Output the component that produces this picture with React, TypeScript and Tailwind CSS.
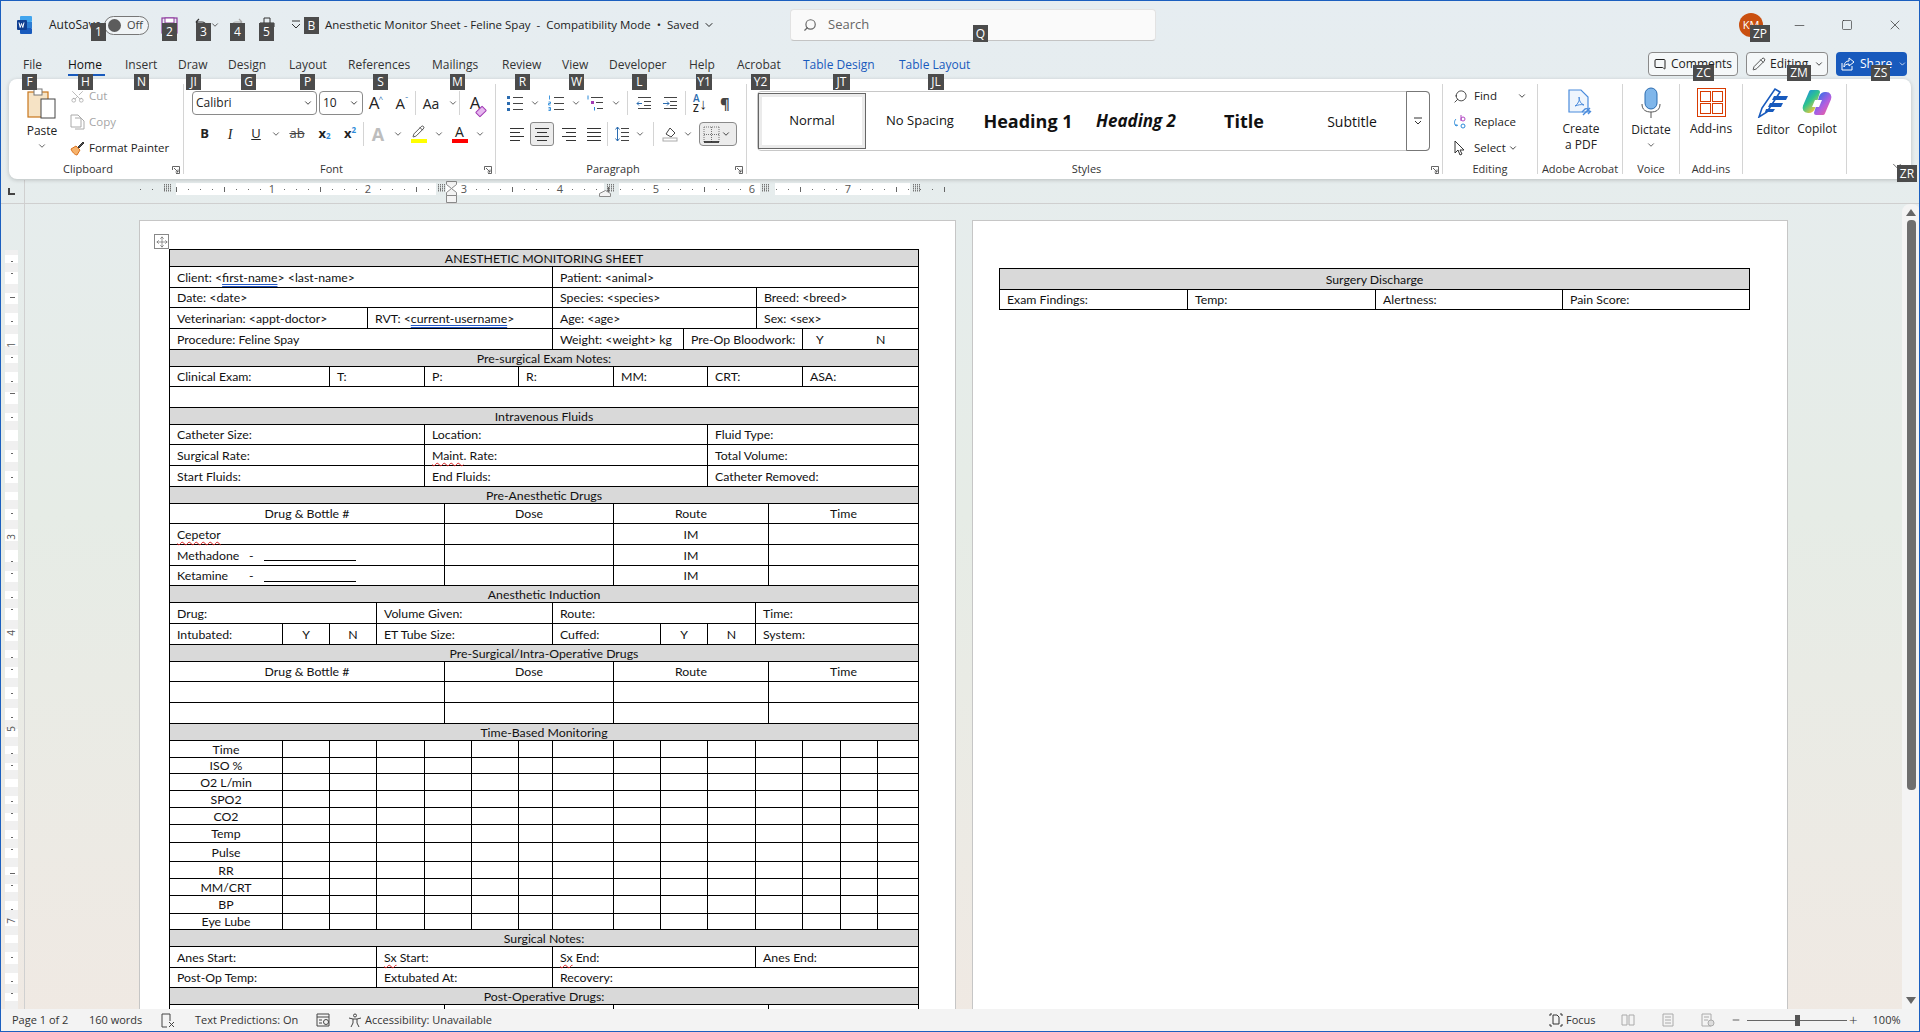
import type { ReactNode } from "react";
import { ChevronDown, Scissors, Search, Minus, Square, X, Pencil, MessageSquare, Move } from "lucide-react";

const rowLines = [249, 266, 287, 307, 328, 349, 366, 386, 407, 424, 444, 465, 486, 503, 523, 544, 565, 585, 602, 623, 644, 661, 681, 702, 723, 740, 757, 773, 790, 807, 824, 842, 861, 878, 895, 913, 929, 946, 967, 987, 1004];

function Chev({ c = "w-[14px]" }: { c?: string }) {
  return (
    <span className={`flex justify-center ${c}`}>
      <ChevronDown size={10} strokeWidth={2} className="text-[#444]" />
    </span>
  );
}

function S({ c, children }: { c: string; children?: ReactNode }) {
  return <span className={`flex h-full shrink-0 items-center justify-center ${c}`}>{children}</span>;
}

function Sep({ c = "" }: { c?: string }) {
  return <span className={`h-[24px] w-px shrink-0 bg-[#d4d4d4] ${c}`} />;
}

function Tip({ c, children }: { c: string; children: ReactNode }) {
  return (
    <div className={`absolute z-20 flex items-center justify-center bg-[#4b4b4b] text-[12px] leading-none text-white ${c}`}>
      {children}
    </div>
  );
}

function Lines({ rows, x = 2, w = 14, color = "#444" }: { rows: number[]; x?: number; w?: number; color?: string }) {
  return (
    <>
      {rows.map((y) => (
        <line key={y} x1={x} x2={x + w} y1={y} y2={y} stroke={color} strokeWidth="1" />
      ))}
    </>
  );
}

function Ico({ children, w = 18, h = 18 }: { children: ReactNode; w?: number; h?: number }) {
  return (
    <svg width={w} height={h} viewBox={`0 0 ${w} ${h}`} fill="none" className="shrink-0">
      {children}
    </svg>
  );
}

function WordLogo() {
  return (
    <svg width="16" height="18" viewBox="0 0 16 18">
      <rect x="3" y="0" width="12" height="6" rx="1" fill="#41a5ee" />
      <rect x="3" y="6" width="12" height="6" fill="#2b7cd3" />
      <rect x="3" y="12" width="12" height="6" rx="1" fill="#185abd" />
      <rect x="0" y="4" width="10" height="10" rx="1" fill="#103f91" />
      <path d="M2 6.5l1.2 5 1.3-4 1.3 4 1.2-5" stroke="#fff" strokeWidth="1" fill="none" />
    </svg>
  );
}

function TitleBar() {
  return (
    <div className="flex h-[48px] shrink-0 items-center text-[#222]">
      <S c="w-[16px]" />
      <WordLogo />
      <span className="ml-[16px] w-[55px] text-[12px]">AutoSave</span>
      <div className="flex h-[19px] w-[45px] items-center rounded-full border border-[#777] bg-white/40 pl-[3px]">
        <span className="h-[13px] w-[13px] rounded-full bg-[#5c5c5c]" />
        <span className="ml-[6px] text-[11px] text-[#444]">Off</span>
      </div>
      <S c="ml-[12px] w-[17px]">
        <Ico w={17} h={17}>
          <rect x="1" y="1" width="15" height="15" fill="none" stroke="#8e3a9d" strokeWidth="1.2" />
          <rect x="4" y="1" width="9" height="5" fill="#fff" stroke="#8e3a9d" />
        </Ico>
      </S>
      <S c="ml-[14px] w-[16px]">
        <Ico w={16} h={16}>
          <path d="M4 5h6a4 4 0 0 1 4 4v5M4 5l3-3M4 5l3 3" stroke="#333" strokeWidth="1.2" />
        </Ico>
      </S>
      <Chev c="w-[14px]" />
      <S c="ml-[8px] w-[16px]">
        <Ico w={16} h={16}>
          <path d="M12 5H6a4 4 0 0 0-4 4v5M12 5L9 2M12 5l-3 3" stroke="#aaa" strokeWidth="1.2" />
        </Ico>
      </S>
      <S c="ml-[13px] w-[16px]">
        <Ico w={16} h={16}>
          <path d="M5 6V1h6v5M1 6h14v4H1zM3 10v5h10v-5" stroke="#333" strokeWidth="1" />
        </Ico>
      </S>
      <S c="ml-[16px] w-[10px]">
        <Ico w={10} h={10}>
          <path d="M1 1h8M1 4l4 4 4-4" stroke="#333" strokeWidth="1" />
        </Ico>
      </S>
      <div className="ml-[24px] flex w-[465px] shrink-0 items-center whitespace-pre text-[11.5px] text-[#222]">
        Anesthetic Monitor Sheet - Feline Spay  -  Compatibility Mode  •  Saved
        <ChevronDown size={12} className="ml-[4px]" />
      </div>
      <div className="flex h-[32px] w-[366px] shrink-0 items-center rounded-[4px] border border-[#e2e2e2] border-b-[#c4c4c4] bg-[#fafafa] pl-[12px] text-[13px] text-[#666]">
        <Search size={14} className="-scale-x-100 text-[#666]" />
        <span className="ml-[11px]">Search</span>
      </div>
      <div className="ml-[583px] flex h-[24px] w-[24px] shrink-0 items-center justify-center rounded-full bg-[#ca5010] text-[11px] text-white">
        KM
      </div>
      <S c="ml-[28px] w-[16px]">
        <Minus size={15} strokeWidth={1} />
      </S>
      <S c="ml-[32px] w-[16px]">
        <Square size={12} strokeWidth={1.2} />
      </S>
      <S c="ml-[32px] w-[16px]">
        <X size={16} strokeWidth={1} />
      </S>
    </div>
  );
}

const tabs = [
  ["File", "w-[45px]"],
  ["Home", "w-[57px]"],
  ["Insert", "w-[53px]"],
  ["Draw", "w-[50px]"],
  ["Design", "w-[61px]"],
  ["Layout", "w-[59px]"],
  ["References", "w-[84px]"],
  ["Mailings", "w-[70px]"],
  ["Review", "w-[60px]"],
  ["View", "w-[47px]"],
  ["Developer", "w-[80px]"],
  ["Help", "w-[48px]"],
  ["Acrobat", "w-[66px]"],
];

function TabRow() {
  return (
    <div className="flex h-[30px] shrink-0 items-center pl-[22px] text-[12px] text-[#333]">
      {tabs.map(([name, w]) => (
        <span key={name} className={`relative shrink-0 pt-[2px] ${w} ${name === "Home" ? "font-medium text-[#111]" : ""}`}>
          {name}
          {name === "Home" && <span className="absolute left-0 top-[20px] h-[2px] w-[37px] bg-[#185abd]" />}
        </span>
      ))}
      <span className="w-[96px] shrink-0 pt-[2px] text-[#185abd]">Table Design</span>
      <span className="w-[80px] shrink-0 pt-[2px] text-[#185abd]">Table Layout</span>
      <div className="ml-[669px] flex h-[24px] w-[90px] shrink-0 items-center rounded-[4px] border border-[#8a8a8a] bg-white/60 pl-[5px] text-[12px] text-[#222]">
        <MessageSquare size={12} className="-scale-x-100" />
        <span className="ml-[5px]">Comments</span>
      </div>
      <div className="ml-[8px] flex h-[24px] w-[82px] shrink-0 items-center rounded-[4px] border border-[#8a8a8a] bg-white/60 pl-[5px] text-[12px] text-[#222]">
        <Pencil size={14} strokeWidth={1.3} />
        <span className="ml-[4px]">Editing</span>
        <ChevronDown size={10} className="ml-[6px]" />
      </div>
      <div className="ml-[8px] flex h-[24px] w-[71px] shrink-0 items-center rounded-[4px] bg-[#185abd] pl-[5px] text-[12px] text-white">
        <Ico w={14} h={14}>
          <path d="M1 6v7h10V9M8 1l5 4-5 4V7C5 7 4 8 3 10c0-4 2-6 5-6z" stroke="#fff" strokeWidth="1" />
        </Ico>
        <span className="ml-[5px]">Share</span>
        <ChevronDown size={10} className="ml-[6px]" />
      </div>
    </div>
  );
}

function Launcher() {
  return (
    <svg width="8" height="8" viewBox="0 0 8 8" fill="none" className="absolute bottom-[0px] right-[3px]">
      <path d="M0.5 4V0.5H7.5V7.5H4M2 2l4 4M6 3.5V6H3.5" stroke="#555" strokeWidth="0.9" />
    </svg>
  );
}

function Group({ c, label, launcher, children }: { c: string; label?: string; launcher?: boolean; children: ReactNode }) {
  return (
    <div className={`relative my-[5px] flex shrink-0 flex-col border-r border-[#d4d4d4] ${c}`}>
      <div className="h-[79px] shrink-0">{children}</div>
      <div className={`text-center text-[11px] leading-[11px] text-[#333] ${launcher ? "pr-[16px]" : ""}`}>{label}</div>
      {launcher && <Launcher />}
    </div>
  );
}

function Clipboard() {
  return (
    <Group c="w-[175px]" label="Clipboard" launcher>
      <div className="flex h-full">
        <div className="flex w-[58px] flex-col items-center pl-[8px] pt-[4px]">
          <svg width="30" height="31" viewBox="0 0 30 31" fill="none">
            <rect x="1" y="4" width="20" height="25" fill="#f6e3c5" stroke="#c8761c" strokeWidth="1.2" />
            <rect x="7" y="1" width="8" height="6" fill="#fff" stroke="#777" />
            <rect x="14" y="11" width="14" height="19" fill="#fff" stroke="#444" />
          </svg>
          <span className="mt-[5px] text-[12px] leading-[14px] text-[#222]">Paste</span>
          <ChevronDown size={10} className="mt-[3px] text-[#444]" />
        </div>
        <div className="-mt-px text-[11.5px] text-[#222]">
          <div className="flex h-[26px] items-center pl-[3px] text-[#a6a6a6]">
            <Scissors size={15} strokeWidth={1.2} className="-rotate-90" />
            <span className="ml-[4px]">Cut</span>
          </div>
          <div className="flex h-[26px] items-center pl-[3px] text-[#a6a6a6]">
            <Ico w={15} h={16}>
              <path d="M1 1h7l3 3v9H1zM5 4h6l3 3v8H5" stroke="#aaa" strokeWidth="1" />
            </Ico>
            <span className="ml-[4px]">Copy</span>
          </div>
          <div className="flex h-[26px] items-center whitespace-nowrap pl-[3px]">
            <Ico w={15} h={16}>
              <path d="M1 9l5-3 4 4-3 5c-2 0-5-3-6-6z" fill="#f6b26b" stroke="#d9701c" />
              <path d="M8 7l5-5 1 1-5 5z" fill="#555" stroke="#333" />
            </Ico>
            <span className="ml-[4px]">Format Painter</span>
          </div>
        </div>
      </div>
    </Group>
  );
}

function FontGroup() {
  return (
    <Group c="w-[312px]" label="Font" launcher>
      <div className="flex h-[24px] items-center pl-[8px] mt-[7px] text-[#222]">
        <div className="flex h-[24px] w-[125px] shrink-0 items-center justify-between rounded-[4px] border border-[#8a8a8a] bg-white pl-[3px] pr-[3px] text-[12px]">
          Calibri
          <ChevronDown size={10} />
        </div>
        <div className="ml-[2px] flex h-[24px] w-[44px] shrink-0 items-center justify-between rounded-[4px] border border-[#8a8a8a] bg-white pl-[3px] pr-[3px] text-[12px]">
          10
          <ChevronDown size={10} />
        </div>
        <S c="w-[26px] text-[17px]">
          A<sup className="-ml-px text-[8px] text-[#2b6cb0]">^</sup>
        </S>
        <S c="w-[26px] text-[15px]">
          A<sup className="text-[8px] text-[#2b6cb0]">ˇ</sup>
        </S>
        <Sep />
        <S c="w-[30px] text-[14px]">Aa</S>
        <Chev c="w-[13px]" />
        <Sep />
        <S c="w-[30px] text-[17px]">
          <span className="relative">
            A
            <span className="absolute -right-[6px] bottom-[1px] h-[7px] w-[10px] -rotate-45 rounded-[1px] border border-[#a23cb4] bg-[#e6b8ef]" />
          </span>
        </S>
      </div>
      <div className="mt-[7px] flex h-[24px] items-center pl-[8px] text-[13px] text-[#222]">
        <S c="w-[25px] font-bold">B</S>
        <S c="w-[26px] italic font-['Liberation_Serif',serif] text-[14px]">I</S>
        <S c="w-[26px] underline">U</S>
        <Chev />
        <S c="w-[28px] line-through text-[#444]">ab</S>
        <S c="w-[27px] font-bold">
          x<sub className="text-[8px] text-[#2b8ad9]">2</sub>
        </S>
        <S c="w-[24px] font-bold">
          x<sup className="text-[8px] text-[#2b8ad9]">2</sup>
        </S>
        <Sep c="mx-px" />
        <S c="w-[26px] text-[18px] font-bold text-[#bdbdbd]">A</S>
        <Chev c="w-[13px]" />
        <S c="w-[29px]">
          <span className="flex flex-col items-center">
            <Pencil size={13} strokeWidth={1.4} />
            <span className="mt-[1px] h-[4px] w-[16px] bg-[#ffff00]" />
          </span>
        </S>
        <Chev c="w-[12px]" />
        <S c="w-[29px]">
          <span className="flex flex-col items-center text-[14px] leading-[14px]">
            A
            <span className="h-[4px] w-[16px] bg-[#ff0000]" />
          </span>
        </S>
        <Chev c="w-[12px]" />
      </div>
    </Group>
  );
}

function AlignIcon({ kind }: { kind: "l" | "c" | "r" | "j" }) {
  const rows = [2, 6, 10, 14];
  const widths = kind === "j" ? [14, 14, 14, 14] : [14, 10, 14, 10];
  return (
    <Ico w={16} h={16}>
      {rows.map((y, i) => {
        const w = widths[i];
        const x = kind === "c" ? 8 - w / 2 : kind === "r" ? 15 - w : 1;
        return <line key={y} x1={x} x2={x + w} y1={y + 0.5} y2={y + 0.5} stroke="#333" />;
      })}
    </Ico>
  );
}

function ListIcon({ color }: { color: string }) {
  return (
    <Ico w={18} h={16}>
      <rect x="1" y="1" width="3" height="3" fill={color} />
      <rect x="1" y="7" width="3" height="3" fill={color} />
      <rect x="1" y="13" width="3" height="3" fill={color} />
      <Lines rows={[2.5, 8.5, 14.5]} x={7} w={10} />
    </Ico>
  );
}

function NumIcon() {
  return (
    <Ico w={18} h={16}>
      <path d="M2.5 0.5v4M1.5 7h2v1.5h-2V10h2M1.5 12.5h2v3h-2M1.5 14h2" stroke="#2b8ad9" strokeWidth="0.9" />
      <Lines rows={[2.5, 8.5, 14.5]} x={7} w={10} />
    </Ico>
  );
}

function MultiIcon() {
  return (
    <Ico w={18} h={16}>
      <path d="M2 0.5v4" stroke="#2b8ad9" />
      <rect x="5" y="6" width="3" height="3" fill="#a23cb4" />
      <path d="M8.5 12v3.5" stroke="#2b8ad9" />
      <Lines rows={[2.5]} x={5} w={12} />
      <Lines rows={[7.5]} x={10} w={7} />
      <Lines rows={[13.5]} x={11} w={6} />
    </Ico>
  );
}

function ParagraphGroup() {
  return (
    <Group c="w-[251px]" label="Paragraph" launcher>
      <div className="mt-[7px] flex h-[24px] items-center pl-[8px] text-[#222]">
        <S c="w-[22px]"><ListIcon color="#2b6cb0" /></S>
        <Chev c="w-[18px]" />
        <S c="w-[24px]"><NumIcon /></S>
        <Chev c="w-[15px]" />
        <S c="w-[24px]"><MultiIcon /></S>
        <Chev c="w-[17px]" />
        <Sep c="mx-[3px]" />
        <S c="w-[26px]">
          <Ico w={16} h={14}>
            <Lines rows={[1.5, 12.5]} x={2} w={13} />
            <Lines rows={[5.5, 9.5]} x={8} w={7} />
            <path d="M1 7.5h5M1 7.5l2-2M1 7.5l2 2" stroke="#2b6cb0" />
          </Ico>
        </S>
        <S c="w-[26px]">
          <Ico w={16} h={14}>
            <Lines rows={[1.5, 12.5]} x={2} w={13} />
            <Lines rows={[5.5, 9.5]} x={8} w={7} />
            <path d="M1 7.5h6M7 7.5l-2-2M7 7.5l-2 2" stroke="#2b6cb0" />
          </Ico>
        </S>
        <Sep c="mx-[2px]" />
        <S c="-ml-px w-[26px]">
          <span className="flex items-center text-[10px] font-semibold leading-[10px]">
            <span className="flex flex-col"><span className="text-[#2b6cb0]">A</span><span>Z</span></span>
            <span className="text-[15px] font-normal">↓</span>
          </span>
        </S>
        <S c="w-[24px] text-[15px] font-bold text-[#444]">¶</S>
      </div>
      <div className="mt-[7px] flex h-[24px] items-center pl-[8px] text-[#222]">
        <S c="w-[26px]"><AlignIcon kind="l" /></S>
        <S c="w-[24px] rounded-[3px] border border-[#8a8a8a] bg-[#ececec]"><AlignIcon kind="c" /></S>
        <S c="ml-[2px] w-[25px]"><AlignIcon kind="r" /></S>
        <S c="w-[26px]"><AlignIcon kind="j" /></S>
        <Sep />
        <S c="ml-[2px] w-[23px]">
          <Ico w={16} h={16}>
            <Lines rows={[2.5, 6.5, 10.5, 14.5]} x={7} w={8} />
            <path d="M3.5 1v14M3.5 1l-2 2.5M3.5 1l2 2.5M3.5 15l-2-2.5M3.5 15l2-2.5" stroke="#2b6cb0" />
          </Ico>
        </S>
        <Chev c="w-[14px]" />
        <Sep c="ml-[6px]" />
        <S c="ml-[5px] w-[22px]">
          <Ico w={16} h={16}>
            <path d="M4 8l4-6 5 5-4 4z" stroke="#444" fill="#fff" />
            <rect x="1" y="12" width="14" height="3" fill="#fff" stroke="#aaa" />
          </Ico>
        </S>
        <Chev c="w-[14px]" />
        <div className="ml-[4px] flex h-[24px] w-[38px] shrink-0 items-center justify-between rounded-[4px] border border-[#8a8a8a] bg-[#ececec] pl-[3px] pr-[5px]">
          <Ico w={17} h={17}>
            <path d="M1 1h15M1 1v15M16 1v15M8.5 1v15M1 8.5h15" stroke="#777" strokeDasharray="1 1" />
            <line x1="1" x2="16" y1="16" y2="16" stroke="#111" strokeWidth="1.5" />
          </Ico>
          <ChevronDown size={10} />
        </div>
      </div>
    </Group>
  );
}

function StylesGroup() {
  return (
    <Group c="w-[696px]" label="Styles" launcher>
      <div className="ml-[10px] mt-[7px] flex h-[60px] w-[673px] items-center rounded-[4px] border border-[#c8c8c8] text-[#111]">
        <div className="flex h-[56px] w-[108px] shrink-0 items-center justify-center border border-[#666] text-[13px] outline-[3px] -outline-offset-[4px] outline-[#ebebeb]">Normal</div>
        <div className="flex w-[108px] shrink-0 justify-center text-[13px]">No Spacing</div>
        <div className="flex w-[108px] shrink-0 justify-center text-[18px] font-bold">Heading 1</div>
        <div className="flex w-[108px] shrink-0 justify-center text-[17px] font-bold italic">Heading 2</div>
        <div className="flex w-[108px] shrink-0 justify-center text-[18px] font-bold">Title</div>
        <div className="flex w-[108px] shrink-0 justify-center text-[14px]">Subtitle</div>
        <div className="-mr-px ml-auto flex h-[60px] w-[24px] shrink-0 items-center justify-center rounded-r-[4px] border border-[#777]">
          <Ico w={8} h={8}>
            <path d="M0 1h8M1 4l3 3 3-3" stroke="#333" />
          </Ico>
        </div>
      </div>
    </Group>
  );
}

function Editing() {
  return (
    <Group c="w-[95px]" label="Editing">
      <div className="-mt-px pl-[10px] text-[11.5px] text-[#222]">
        <div className="flex h-[26px] items-center">
          <Search size={15} strokeWidth={1.3} className="-scale-x-100" />
          <span className="ml-[6px] w-[43px]">Find</span>
          <ChevronDown size={10} />
        </div>
        <div className="flex h-[26px] items-center">
          <Ico w={15} h={16}>
            <path d="M3 5C1 7 1 10 3 12l2-1M3 12l0-2" stroke="#2b8ad9" />
            <path d="M8 1v6" stroke="#b146c2" />
            <circle cx="10" cy="5" r="2" stroke="#b146c2" />
            <circle cx="10" cy="12" r="2" stroke="#2b8ad9" />
          </Ico>
          <span className="ml-[6px]">Replace</span>
        </div>
        <div className="flex h-[26px] items-center">
          <Ico w={15} h={16}>
            <path d="M2 1v12l3-3 2 5 2-1-2-4h4z" fill="#fff" stroke="#333" />
          </Ico>
          <span className="ml-[6px]">Select</span>
          <ChevronDown size={10} className="ml-[2px]" />
        </div>
      </div>
    </Group>
  );
}

function BigLabel({ children }: { children: ReactNode }) {
  return <div className="text-center text-[12px] leading-[16px] text-[#222]">{children}</div>;
}

function RightGroups() {
  return (
    <>
      <Group c="w-[85px]" label="Adobe Acrobat">
        <div className="flex flex-col items-center pl-[2px] pt-[5px]">
          <svg width="26" height="30" viewBox="0 0 26 30" fill="none">
            <path d="M1 1h12l7 7v15H1z" fill="#eef5fd" stroke="#4a8bdc" strokeWidth="1.2" />
            <path d="M7 17c3-2 5-6 4-9 0 4 2 7 5 8-3-1-6 0-9 1z" stroke="#4a8bdc" />
            <path d="M15 26l7-7M14 23l3-3a3 3 0 0 1 4 4M23 22l-3 3" stroke="#4a8bdc" strokeWidth="1.4" />
          </svg>
          <div className="mt-[2px]"><BigLabel>Create<br />a PDF</BigLabel></div>
        </div>
      </Group>
      <Group c="w-[57px]" label="Voice">
        <div className="flex flex-col items-center pt-[3px]">
          <svg width="20" height="31" viewBox="0 0 20 31" fill="none">
            <rect x="4" y="1" width="12" height="21" rx="6" fill="#7fb6ea" stroke="#2b6cb0" />
            <path d="M1 17c0 6 4 8 9 8s9-2 9-8M10 25v6" stroke="#555" />
          </svg>
          <div className="mt-[4px]"><BigLabel>Dictate</BigLabel></div>
          <ChevronDown size={10} className="mt-[2px] text-[#444]" />
        </div>
      </Group>
      <Group c="w-[63px]" label="Add-ins">
        <div className="flex flex-col items-center pt-[4px]">
          <svg width="29" height="29" viewBox="0 0 29 29" fill="none" stroke="#d83b01">
            <rect x="0.5" y="0.5" width="28" height="28" />
            <rect x="3.5" y="3.5" width="10" height="10" />
            <rect x="15.5" y="3.5" width="10" height="10" />
            <rect x="3.5" y="15.5" width="10" height="10" />
            <rect x="15.5" y="15.5" width="10" height="10" />
          </svg>
          <div className="mt-[4px]"><BigLabel>Add-ins</BigLabel></div>
        </div>
      </Group>
      <Group c="w-[104px]">
        <div className="flex pt-[3px]">
          <div className="flex w-[57px] flex-col items-center pl-[3px]">
            <svg width="32" height="31" viewBox="0 0 32 31" fill="none">
              <path d="M2 30l3-9L18 2l5 3L10 25z" fill="#fff" stroke="#185abd" strokeWidth="1.6" />
              <path d="M17 9h14l-2 4H15zM13 16h13l-2 4H11zM9 22h9l-2 3H8z" fill="#185abd" />
            </svg>
            <div className="mt-[4px]"><BigLabel>Editor</BigLabel></div>
          </div>
          <div className="-ml-[4px] flex w-[42px] flex-col items-center">
            <svg width="30" height="29" viewBox="0 0 30 29" fill="none" className="mt-[1px]">
              <defs>
                <linearGradient id="cpA" x1="0" y1="0" x2="0.7" y2="1">
                  <stop offset="0" stopColor="#1c8fe0" />
                  <stop offset="0.5" stopColor="#2fc48d" />
                  <stop offset="1" stopColor="#f2c83b" />
                </linearGradient>
                <linearGradient id="cpB" x1="0.2" y1="0" x2="1" y2="1">
                  <stop offset="0" stopColor="#3b6fe8" />
                  <stop offset="0.55" stopColor="#b15fe0" />
                  <stop offset="1" stopColor="#f0609a" />
                </linearGradient>
              </defs>
              <path d="M9 4h7L11 20c-1 2-2 3-4 3H6c-3 0-4-2-3-5z" fill="url(#cpA)" stroke="url(#cpA)" strokeWidth="4" strokeLinejoin="round" />
              <path d="M21 25h-7l5-16c1-2 2-3 4-3h1c3 0 4 2 3 5z" fill="url(#cpB)" stroke="url(#cpB)" strokeWidth="4" strokeLinejoin="round" />
              <path d="M13 12h7l-3 7h-7z" fill="#fff" />
            </svg>
            <div className="mt-[4px]"><BigLabel>Copilot</BigLabel></div>
          </div>
        </div>
      </Group>
    </>
  );
}

function Ribbon() {
  return (
    <div className="relative ml-[8px] flex h-[100px] w-[1902px] shrink-0 rounded-[8px] bg-white shadow-[0_1px_4px_rgba(0,0,0,0.2)]">
      <Clipboard />
      <FontGroup />
      <ParagraphGroup />
      <StylesGroup />
      <Editing />
      <RightGroups />
      <ChevronDown size={14} strokeWidth={1.2} className="absolute bottom-[6px] right-[7px] text-[#333]" />
    </div>
  );
}

function ColMark({ x }: { x: number }) {
  return (
    <g stroke="#777" strokeWidth="1" strokeDasharray="1 1">
      {[1, 3, 5, 7].map((d) => (
        <line key={d} x1={x - 4} x2={x + 4} y1={184 + d} y2={184 + d} />
      ))}
      {[0, 2, 4, 6].map((d) => (
        <line key={d} x1={x - 3.5 + d} x2={x - 3.5 + d} y1={184} y2={192} />
      ))}
    </g>
  );
}

function HRuler() {
  const ticks: number[] = [];
  for (let x = 140; x <= 944; x += 12) ticks.push(x);
  return (
    <div className="mt-px h-[24px] shrink-0 border-b border-[#cfcfcf]">
      <svg width="1918" height="23" viewBox="1 180 1918 23" className="block">
        <path d="M9 188v6h6" stroke="#444" strokeWidth="2" fill="none" />
        <line x1="24.5" x2="24.5" y1="180" y2="203" stroke="#d0d0d0" />
        <rect x="176" y="183" width="260" height="12" fill="#fff" />
        <rect x="446" y="183" width="158" height="12" fill="#fff" />
        <rect x="619" y="183" width="141" height="12" fill="#fff" />
        <rect x="775" y="183" width="135" height="12" fill="#fff" />
        {ticks.map((x) => {
          const inch = (x - 176) / 96;
          if (Number.isInteger(inch) && inch > 0 && inch < 8) {
            return (
              <text key={x} x={x} y={193} fontSize="11" textAnchor="middle" fill="#555" fontFamily="Open Sans, sans-serif">
                {inch}
              </text>
            );
          }
          const half = (x - 176) % 48 === 0;
          return <rect key={x} x={x} y={half ? 187 : 189} width="1" height={half ? 5 : 1} fill="#666" />;
        })}
        {[168, 442, 611, 766, 917].map((x) => (
          <ColMark key={x} x={x} />
        ))}
        <path d="M446.5 181.5h10v3l-5 4 5 4v3h-10v-3l5-4-5-4zM446.5 195.5h10v7h-10z" fill="#f4f4f4" stroke="#8a8a8a" />
        <path d="M599.5 196.5v-3l6-3 5 3v3z" fill="#f4f4f4" stroke="#8a8a8a" />
      </svg>
    </div>
  );
}

function VRuler() {
  const segs: [number, number][] = [];
  for (let i = 0; i < rowLines.length; i++) {
    const from = rowLines[i] + 6;
    const to = (rowLines[i + 1] ?? 1012) - 3;
    if (to > from) segs.push([from, to]);
  }
  const ticks: number[] = [];
  for (let y = 261; y < 1009; y += 12) ticks.push(y);
  return (
    <svg width="24" height="805" viewBox="1 204 24 805" className="block shrink-0">
      <rect x="5" y="250" width="13" height="760" fill="#f0f0f0" />
      {segs.map(([a, b]) => (
        <rect key={a} x="5" y={a} width="13" height={b - a} fill="#fff" />
      ))}
      {ticks.map((y) => {
        const inch = (y - 249) / 96;
        if (!segs.some(([a, b]) => y >= a && y < b)) return null;
        if (Number.isInteger(inch)) {
          return (
            <text key={y} x={0} y={0} fontSize="10" textAnchor="middle" fill="#555" fontFamily="Open Sans, sans-serif" transform={`translate(15 ${y}) rotate(-90)`}>
              {inch}
            </text>
          );
        }
        const half = (y - 249 + 48) % 96 === 0;
        return <rect key={y} x={half ? 10 : 11} y={y} width={half ? 5 : 2} height="1" fill="#666" />;
      })}
      <line x1="24.5" x2="24.5" y1="204" y2="1009" stroke="#d0d0d0" />
    </svg>
  );
}

function R({ h = "h-[21px]", cols, gray, children }: { h?: string; cols: string; gray?: boolean; children: ReactNode }) {
  return <div className={`grid border-b border-black ${h} ${cols} ${gray ? "bg-[#d9d9d9]" : ""}`}>{children}</div>;
}

function C({ center, children }: { center?: boolean; children?: ReactNode }) {
  return (
    <div className={`flex min-w-0 items-center whitespace-pre border-r border-black px-[7px] pt-[2px] leading-none last:border-r-0 ${center ? "justify-center" : ""}`}>
      {children}
    </div>
  );
}

function Head({ children }: { children: ReactNode }) {
  return (
    <R h="h-[17px]" cols="grid-cols-1" gray>
      <C center>{children}</C>
    </R>
  );
}

const drugCols = "grid-cols-[275px_169px_155px_1fr]";
const tbmCols = "grid-cols-[113px_47px_47px_48px_47px_47px_34px_61px_47px_47px_48px_47px_38px_37px_1fr]";
const tbmRows = [
  ["Time", "h-[17px]"],
  ["ISO %", "h-[16px]"],
  ["O2 L/min", "h-[17px]"],
  ["SPO2", "h-[17px]"],
  ["CO2", "h-[17px]"],
  ["Temp", "h-[18px]"],
  ["Pulse", "h-[19px]"],
  ["RR", "h-[17px]"],
  ["MM/CRT", "h-[17px]"],
  ["BP", "h-[18px]"],
  ["Eye Lube", "h-[16px]"],
];

const squiggle = "underline decoration-wavy decoration-[#d92020] decoration-1 underline-offset-2";
const blueLine = "underline decoration-double decoration-[#2457c5] decoration-1 underline-offset-2";

function DrugHead() {
  return (
    <R h="h-[20px]" cols={drugCols}>
      <C center>Drug &amp; Bottle #</C>
      <C center>Dose</C>
      <C center>Route</C>
      <C center>Time</C>
    </R>
  );
}

function DrugLine({ name }: { name: string }) {
  return (
    <span className="flex items-center">
      <span className="w-[72px]">{name}</span>-<span className="ml-[10px] h-[11px] w-[92px] border-b border-black" />
    </span>
  );
}

function MainTable() {
  return (
    <div className="w-[750px] border-x border-t border-black font-['Lato',sans-serif] text-[12.3px] text-[#111]">
      <Head>ANESTHETIC MONITORING SHEET</Head>
      <R cols="grid-cols-[383px_1fr]">
        <C>
          Client: &lt;<span className={blueLine}>first-name</span>&gt; &lt;last-name&gt;
        </C>
        <C>Patient: &lt;animal&gt;</C>
      </R>
      <R h="h-[20px]" cols="grid-cols-[383px_204px_1fr]">
        <C>Date: &lt;date&gt;</C>
        <C>Species: &lt;species&gt;</C>
        <C>Breed: &lt;breed&gt;</C>
      </R>
      <R cols="grid-cols-[198px_185px_204px_1fr]">
        <C>Veterinarian: &lt;appt-doctor&gt;</C>
        <C>
          RVT: &lt;<span className={blueLine}>current-username</span>&gt;
        </C>
        <C>Age: &lt;age&gt;</C>
        <C>Sex: &lt;sex&gt;</C>
      </R>
      <R cols="grid-cols-[383px_131px_119px_1fr]">
        <C>Procedure: Feline Spay</C>
        <C>Weight: &lt;weight&gt; kg</C>
        <C>Pre-Op Bloodwork:</C>
        <C>
          <span className="ml-[6px] w-[60px]">Y</span>N
        </C>
      </R>
      <Head>Pre-surgical Exam Notes:</Head>
      <R h="h-[20px]" cols="grid-cols-[160px_95px_94px_95px_94px_95px_1fr]">
        <C>Clinical Exam:</C>
        <C>T:</C>
        <C>P:</C>
        <C>R:</C>
        <C>MM:</C>
        <C>CRT:</C>
        <C>ASA:</C>
      </R>
      <R cols="grid-cols-1">
        <C />
      </R>
      <Head>Intravenous Fluids</Head>
      <R h="h-[20px]" cols="grid-cols-[255px_283px_1fr]">
        <C>Catheter Size:</C>
        <C>Location:</C>
        <C>Fluid Type:</C>
      </R>
      <R cols="grid-cols-[255px_283px_1fr]">
        <C>Surgical Rate:</C>
        <C>
          <span className={squiggle}>Maint</span>. Rate:
        </C>
        <C>Total Volume:</C>
      </R>
      <R cols="grid-cols-[255px_283px_1fr]">
        <C>Start Fluids:</C>
        <C>End Fluids:</C>
        <C>Catheter Removed:</C>
      </R>
      <Head>Pre-Anesthetic Drugs</Head>
      <DrugHead />
      <R cols={drugCols}>
        <C>
          <span className={squiggle}>Cepetor</span>
        </C>
        <C />
        <C center>IM</C>
        <C />
      </R>
      <R cols={drugCols}>
        <C>
          <DrugLine name="Methadone" />
        </C>
        <C />
        <C center>IM</C>
        <C />
      </R>
      <R h="h-[20px]" cols={drugCols}>
        <C>
          <DrugLine name="Ketamine" />
        </C>
        <C />
        <C center>IM</C>
        <C />
      </R>
      <Head>Anesthetic Induction</Head>
      <R cols="grid-cols-[207px_176px_203px_1fr]">
        <C>Drug:</C>
        <C>Volume Given:</C>
        <C>Route:</C>
        <C>Time:</C>
      </R>
      <R cols="grid-cols-[113px_47px_47px_176px_108px_47px_48px_1fr]">
        <C>Intubated:</C>
        <C center>Y</C>
        <C center>N</C>
        <C>ET Tube Size:</C>
        <C>Cuffed:</C>
        <C center>Y</C>
        <C center>N</C>
        <C>System:</C>
      </R>
      <Head>Pre-Surgical/Intra-Operative Drugs</Head>
      <DrugHead />
      {["a", "b"].map((k) => (
        <R key={k} cols={drugCols}>
          <C />
          <C />
          <C />
          <C />
        </R>
      ))}
      <Head>Time-Based Monitoring</Head>
      {tbmRows.map(([label, h]) => (
        <R key={label} h={h} cols={tbmCols}>
          <C center>{label}</C>
          {Array.from({ length: 14 }, (_, i) => (
            <C key={i} />
          ))}
        </R>
      ))}
      <Head>Surgical Notes:</Head>
      <R cols="grid-cols-[207px_176px_203px_1fr]">
        <C>Anes Start:</C>
        <C>
          <span className={squiggle}>Sx</span> Start:
        </C>
        <C>
          <span className={squiggle}>Sx</span> End:
        </C>
        <C>Anes End:</C>
      </R>
      <R h="h-[20px]" cols="grid-cols-[207px_176px_1fr]">
        <C>Post-Op Temp:</C>
        <C>Extubated At:</C>
        <C>Recovery:</C>
      </R>
      <Head>Post-Operative Drugs:</Head>
      <R cols={drugCols}>
        <C />
        <C />
        <C />
        <C />
      </R>
    </div>
  );
}

function DischargeTable() {
  return (
    <div className="w-[751px] border-x border-t border-black font-['Lato',sans-serif] text-[12.3px] text-[#111]">
      <R h="h-[21px]" cols="grid-cols-1" gray>
        <C center>Surgery Discharge</C>
      </R>
      <R h="h-[20px]" cols="grid-cols-[188px_188px_187px_1fr]">
        <C>Exam Findings:</C>
        <C>Temp:</C>
        <C>Alertness:</C>
        <C>Pain Score:</C>
      </R>
    </div>
  );
}

function Doc() {
  return (
    <div className="flex h-[805px] shrink-0 overflow-hidden">
      <VRuler />
      <div className="flex w-[1877px] shrink-0 gap-[16px] pl-[114px] pt-[16px]">
        <div className="relative h-[1056px] w-[817px] shrink-0 border border-[#c6c6c6] bg-white pl-[29px] pt-[28px]">
          <div className="absolute left-[14px] top-[13px] flex h-[15px] w-[15px] items-center justify-center border border-[#888] bg-white">
            <Move size={12} strokeWidth={1.2} className="text-[#555]" />
          </div>
          <MainTable />
        </div>
        <div className="h-[1056px] w-[816px] shrink-0 border border-[#c6c6c6] bg-white pl-[26px] pt-[47px]">
          <DischargeTable />
        </div>
      </div>
      <div className="flex w-[18px] shrink-0 flex-col items-center rounded-t-[8px] bg-[#f4f4f4]">
        <span className="mt-[5px] h-0 w-0 border-x-[5px] border-b-[7px] border-x-transparent border-b-[#666]" />
        <span className="mt-[4px] h-[570px] w-[9px] rounded-t-[4px] rounded-b-[4px] bg-[#6e6e6e]" />
        <span className="mt-auto mb-[5px] h-0 w-0 border-x-[5px] border-t-[7px] border-x-transparent border-t-[#666]" />
      </div>
    </div>
  );
}

function StatusBar() {
  return (
    <div className="flex h-[22px] shrink-0 items-center bg-[#f3f3f3] pl-[11px] text-[11px] text-[#333]">
      <span className="w-[77px]">Page 1 of 2</span>
      <span className="w-[72px]">160 words</span>
      <Ico w={14} h={15}>
        <path d="M1 1h8v7M1 1v13h5M8 9l5 5M13 9l-5 5" stroke="#444" />
      </Ico>
      <span className="ml-[20px] w-[121px]">Text Predictions: On</span>
      <Ico w={14} h={14}>
        <path d="M1 1h12v12H1zM1 4h12M3 7h3M3 10h3" stroke="#444" />
        <circle cx="10" cy="9" r="2.5" stroke="#444" />
      </Ico>
      <span className="ml-[18px]">
        <Ico w={14} h={15}>
          <circle cx="7" cy="2.5" r="1.5" stroke="#444" />
          <path d="M1 5l4 1h4l4-1M5 6v4l-2 4M9 6v4l2 4" stroke="#444" />
        </Ico>
      </span>
      <span className="ml-[3px] w-[1184px] shrink-0">Accessibility: Unavailable</span>
      <Ico w={14} h={14}>
        <path d="M1 3V1h2M11 1h2v2M13 11v2h-2M3 13H1v-2M4 11V2h4l2 2v7z" stroke="#333" />
      </Ico>
      <span className="ml-[3px] w-[55px] shrink-0">Focus</span>
      <Ico w={14} h={14}>
        <path d="M1 2h5v10H1zM8 2h5v10H8z" stroke="#aaa" />
      </Ico>
      <span className="ml-[27px]">
        <Ico w={12} h={14}>
          <path d="M1 1h10v12H1zM3 4h6M3 7h6M3 10h6" stroke="#aaa" />
        </Ico>
      </span>
      <span className="ml-[27px]">
        <Ico w={14} h={14}>
          <path d="M1 1h9v12H1zM3 4h5M3 7h4" stroke="#aaa" />
          <circle cx="10" cy="10" r="3" fill="#ddd" stroke="#aaa" />
        </Ico>
      </span>
      <Minus size={10} className="ml-[16px] text-[#444]" />
      <div className="relative ml-[6px] h-px w-[100px] bg-[#666]">
        <span className="absolute left-[48px] -top-[5px] h-[11px] w-[5px] bg-[#555]" />
      </div>
      <span className="ml-[2px] text-[15px] font-light leading-none">+</span>
      <span className="ml-[15px] text-[11px]">100%</span>
    </div>
  );
}

function KeyTips() {
  return (
    <>
      <Tip c="left-[90px] top-[22px] h-[18px] w-[15px]">1</Tip>
      <Tip c="left-[161px] top-[22px] h-[18px] w-[15px]">2</Tip>
      <Tip c="left-[195px] top-[22px] h-[18px] w-[15px]">3</Tip>
      <Tip c="left-[229px] top-[22px] h-[18px] w-[15px]">4</Tip>
      <Tip c="left-[258px] top-[22px] h-[18px] w-[15px]">5</Tip>
      <Tip c="left-[303px] top-[16px] h-[17px] w-[15px]">B</Tip>
      <Tip c="left-[972px] top-[24px] h-[17px] w-[15px]">Q</Tip>
      <Tip c="left-[21px] top-[73px] h-[16px] w-[15px]">F</Tip>
      <Tip c="left-[77px] top-[73px] h-[16px] w-[15px]">H</Tip>
      <Tip c="left-[133px] top-[73px] h-[16px] w-[15px]">N</Tip>
      <Tip c="left-[185px] top-[73px] h-[16px] w-[15px]">JI</Tip>
      <Tip c="left-[240px] top-[73px] h-[16px] w-[15px]">G</Tip>
      <Tip c="left-[299px] top-[73px] h-[16px] w-[15px]">P</Tip>
      <Tip c="left-[372px] top-[73px] h-[16px] w-[15px]">S</Tip>
      <Tip c="left-[449px] top-[73px] h-[16px] w-[15px]">M</Tip>
      <Tip c="left-[514px] top-[73px] h-[16px] w-[15px]">R</Tip>
      <Tip c="left-[568px] top-[73px] h-[16px] w-[15px]">W</Tip>
      <Tip c="left-[631px] top-[73px] h-[16px] w-[15px]">L</Tip>
      <Tip c="left-[695px] top-[73px] h-[16px] w-[16px]">Y1</Tip>
      <Tip c="left-[750px] top-[73px] h-[16px] w-[19px]">Y2</Tip>
      <Tip c="left-[832px] top-[73px] h-[16px] w-[17px]">JT</Tip>
      <Tip c="left-[927px] top-[73px] h-[16px] w-[16px]">JL</Tip>
      <Tip c="left-[1749px] top-[24px] h-[17px] w-[20px]">ZP</Tip>
      <Tip c="left-[1692px] top-[64px] h-[16px] w-[21px]">ZC</Tip>
      <Tip c="left-[1786px] top-[64px] h-[16px] w-[24px]">ZM</Tip>
      <Tip c="left-[1870px] top-[64px] h-[16px] w-[19px]">ZS</Tip>
      <Tip c="left-[1896px] top-[164px] h-[17px] w-[20px]">ZR</Tip>
    </>
  );
}

export default function App() {
  return (
    <div className="relative flex h-[1032px] w-[1920px] flex-col overflow-hidden border border-[#1b5fbf] bg-linear-to-b from-[#e6edf1] via-[#e6ece6] to-[#f0e9e3] font-['Open_Sans',sans-serif]">
      <TitleBar />
      <TabRow />
      <Ribbon />
      <HRuler />
      <Doc />
      <StatusBar />
      <KeyTips />
    </div>
  );
}
